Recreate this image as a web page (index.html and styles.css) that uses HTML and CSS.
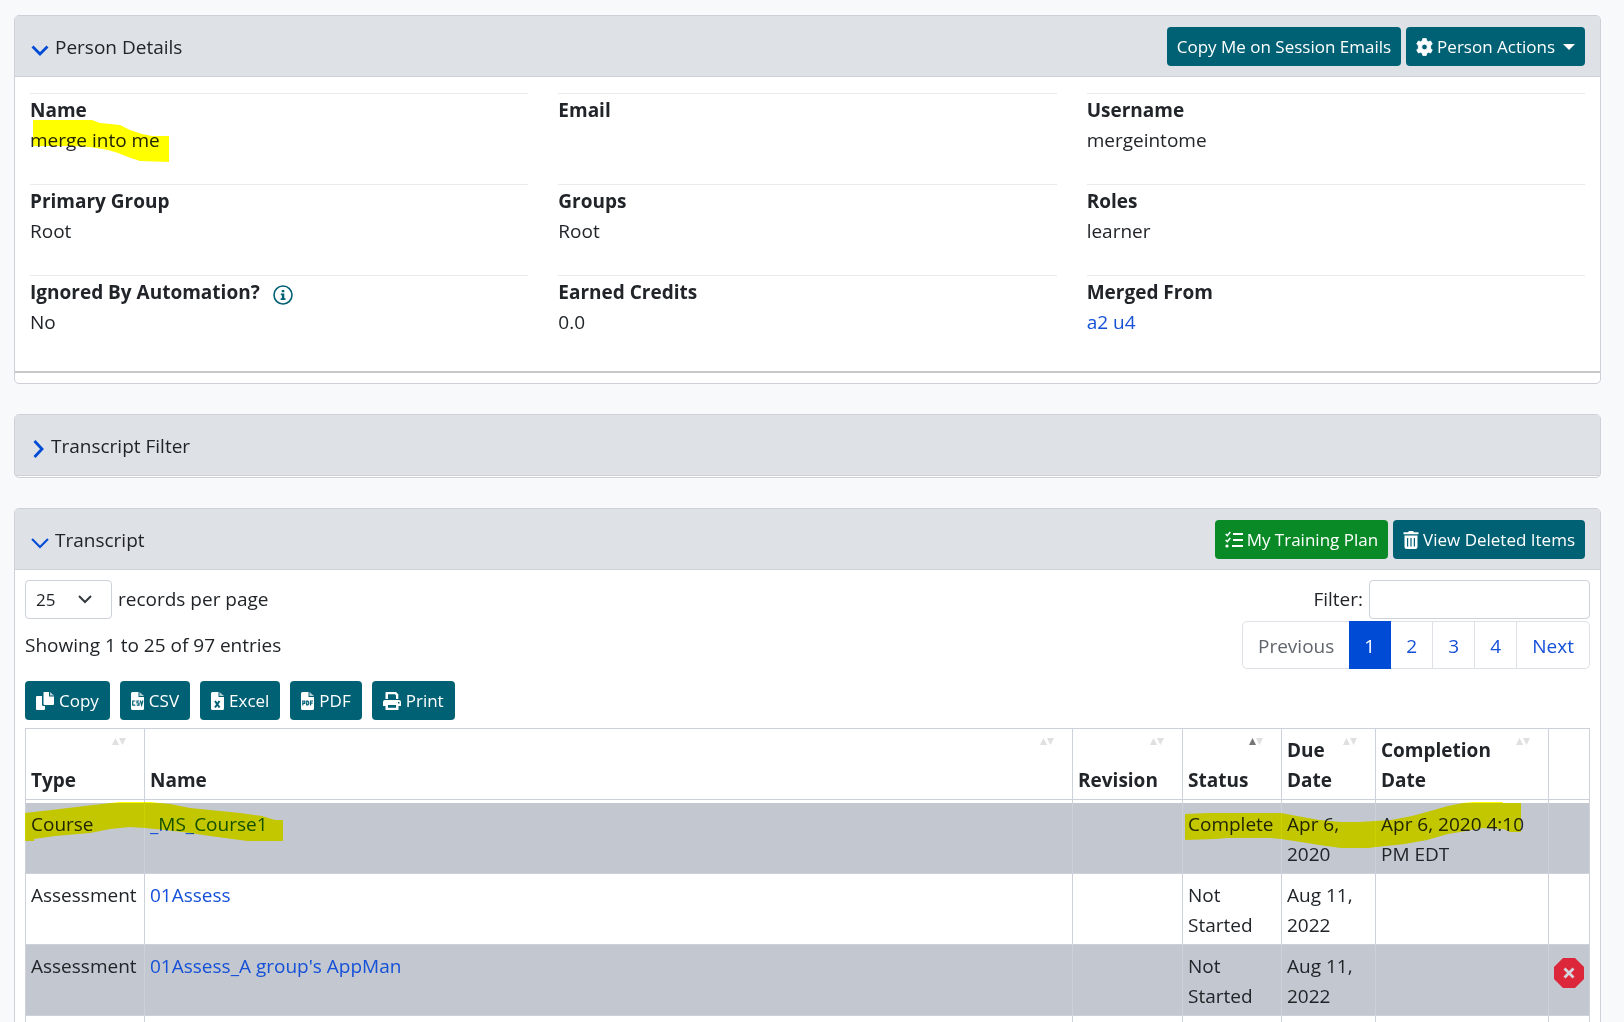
FILE: index.html
```html
<!DOCTYPE html>
<html lang="en">
<head>
<meta charset="utf-8">
<title>Person Details</title>
<link rel="stylesheet" href="styles.css">
</head>
<body>
<main class="page">
  <section class="card">
    <header class="card-header">
      <h2 class="card-title">
        <svg class="chevron" viewBox="0 0 18 18" aria-hidden="true"><path d="M1.500 5.500 9 13l7.500-7.500" fill="none" stroke="currentColor" stroke-width="2.800"/></svg>
        Person Details
      </h2>
      <div class="actions">
        <button type="button" class="btn">Copy Me on Session Emails</button>
        <button type="button" class="btn">
          <svg class="icon gear" viewBox="0 0 17 18" aria-hidden="true"><path fill="currentColor" fill-rule="evenodd" stroke="currentColor" stroke-linejoin="round" stroke-width=".8" d="M6.800.5h3.400l.6 2.300 1.500.9 2.300-.7 1.700 3-1.700 1.700v2.600l1.700 1.700-1.700 3-2.300-.7-1.500.9-.6 2.300H6.800l-.6-2.300-1.500-.9-2.300.7-1.700-3 1.700-1.700V7.700L.7 6l1.700-3 2.300.7 1.500-.9zM8.500 6.200a2.800 2.800 0 1 0 0 5.600 2.800 2.800 0 0 0 0-5.600z"/></svg>
          Person Actions
          <span class="caret"></span>
        </button>
      </div>
    </header>
    <div class="details">
      <dl class="detail-grid">
        <div class="detail">
          <dt>Name</dt>
          <dd>merge into me</dd>
          <svg class="marker marker-name" viewBox="0 0 136 42" aria-hidden="true"><path d="M0 0h59l8 3 20 2 10 5 12 4 10 2h17v26l-29-1-12-4-10-4-10-3-18-3-15-1H0z"/></svg>
        </div>
        <div class="detail"><dt>Email</dt><dd></dd></div>
        <div class="detail"><dt>Username</dt><dd>mergeintome</dd></div>
        <div class="detail"><dt>Primary Group</dt><dd>Root</dd></div>
        <div class="detail"><dt>Groups</dt><dd>Root</dd></div>
        <div class="detail"><dt>Roles</dt><dd>learner</dd></div>
        <div class="detail">
          <dt>Ignored By Automation?
            <svg class="info" viewBox="0 0 20 20" aria-hidden="true"><circle cx="10" cy="10" r="9" fill="none" stroke="currentColor" stroke-width="1.600"/><path fill="currentColor" d="M8.700 5h2.600v2.300H8.700zM7.800 8.500h3.500v4.700h1.200V15H7.600v-1.800h1.300v-2.900H7.800z"/></svg>
          </dt>
          <dd>No</dd>
        </div>
        <div class="detail"><dt>Earned Credits</dt><dd>0.0</dd></div>
        <div class="detail"><dt>Merged From</dt><dd><a href="#">a2 u4</a></dd></div>
      </dl>
      <hr class="divider">
    </div>
  </section>

  <section class="card card-collapsed">
    <header class="card-header">
      <h2 class="card-title">
        <svg class="chevron chevron-right" viewBox="0 0 14 18" aria-hidden="true"><path d="M3.500 1 11 9l-7.500 8" fill="none" stroke="currentColor" stroke-width="2.800"/></svg>
        Transcript Filter
      </h2>
    </header>
  </section>

  <section class="card">
    <header class="card-header">
      <h2 class="card-title">
        <svg class="chevron" viewBox="0 0 18 18" aria-hidden="true"><path d="M1 5 9 13l8-8" fill="none" stroke="currentColor" stroke-width="2"/></svg>
        Transcript
      </h2>
      <div class="actions">
        <button type="button" class="btn btn-green">
          <svg class="icon" viewBox="0 0 18 18" aria-hidden="true"><path d="M8 3h10M8 9h10M7 15h11" stroke="currentColor" stroke-width="2.200" fill="none"/><path d="m.7 3 1.600 1.700L5.300 1M.7 9l1.600 1.700L5.300 7" stroke="currentColor" stroke-width="1.500" fill="none"/><circle cx="2" cy="15" r="1.600" fill="currentColor"/></svg>
          My Training Plan
        </button>
        <button type="button" class="btn">
          <svg class="icon icon-trash" viewBox="0 0 16 18" aria-hidden="true"><path fill="currentColor" fill-rule="evenodd" d="M.5 1.200H5L6 0h4l1 1.200h4.500v2H.5zM1.500 4.500h13V16q0 2-2 2h-9q-2 0-2-2zM4 7v8.500h1.200V7zm3.400 0v8.500h1.200V7zm3.400 0v8.500H12V7z"/></svg>
          View Deleted Items
        </button>
      </div>
    </header>
    <div class="transcript">
      <div class="toolbar">
        <div class="toolbar-left">
          <div class="field">
            <select id="page-size" class="control select"><option>25</option><option>50</option><option>100</option></select>
            <label for="page-size">records per page</label>
          </div>
          <p class="summary">Showing 1 to 25 of 97 entries</p>
        </div>
        <div class="toolbar-right">
          <div class="field">
            <label for="filter">Filter:</label>
            <input id="filter" class="control search" type="search">
          </div>
          <nav class="pagination" aria-label="Transcript pages">
            <a class="disabled" href="#">Previous</a>
            <a class="current" href="#" aria-current="page">1</a>
            <a href="#">2</a>
            <a href="#">3</a>
            <a href="#">4</a>
            <a href="#">Next</a>
          </nav>
        </div>
      </div>
      <div class="exports">
        <button type="button" class="btn">
          <svg class="icon" viewBox="0 0 18 18" aria-hidden="true"><path fill="currentColor" d="M1 4h5v8.500q0 1.500 1.500 1.500H9v3q0 1-1 1H1q-1 0-1-1V5q0-1 1-1zM8 0h5v4.500h5V12q0 1-1 1H8.500q-1 0-1-1V1q0-1 .5-1z"/><path fill="currentColor" opacity=".7" d="M14 0v3.600h4z"/></svg>
          Copy
        </button>
        <button type="button" class="btn">
          <svg class="icon icon-file" viewBox="0 0 13 18" aria-hidden="true"><path fill="currentColor" d="M1.500 0H7.500v5H13v11.500q0 1.500-1.500 1.500h-10Q0 18 0 16.500v-15Q0 0 1.500 0z"/><path fill="currentColor" opacity=".7" d="M8.500 0v4H13z"/><path class="cut" d="M4.300 9H1.700v4.200h2.600M8.200 9H6v2h2v2.200H5.700M9.300 8.500l1.300 4.500 1.300-4.500"/></svg>
          CSV
        </button>
        <button type="button" class="btn">
          <svg class="icon icon-file" viewBox="0 0 13 18" aria-hidden="true"><path fill="currentColor" d="M1.500 0H7.500v5H13v11.500q0 1.500-1.500 1.500h-10Q0 18 0 16.500v-15Q0 0 1.500 0z"/><path fill="currentColor" opacity=".7" d="M8.500 0v4H13z"/><path class="cut cut-bold" d="m4 9 4.500 6.500M8.500 9 4 15.500"/></svg>
          Excel
        </button>
        <button type="button" class="btn">
          <svg class="icon icon-file" viewBox="0 0 13 18" aria-hidden="true"><path fill="currentColor" d="M1.500 0H7.500v5H13v11.500q0 1.500-1.500 1.500h-10Q0 18 0 16.500v-15Q0 0 1.500 0z"/><path fill="currentColor" opacity=".7" d="M8.500 0v4H13z"/><path class="cut" d="M1.800 13.500V9h2v2.300h-2M5.700 9h1l1 1v2l-1 1h-1zM9.600 13.500V9h2.400M9.600 11.200h2"/></svg>
          PDF
        </button>
        <button type="button" class="btn">
          <svg class="icon" viewBox="0 0 18 18" aria-hidden="true"><path fill="currentColor" fill-rule="evenodd" d="M3 0h10l2.300 2.300V7H13V3.500L12 2.300H5V7H2.500V.5zM2 8h14q2 0 2 2v4h-2.500v4h-13v-4H0v-4q0-2 2-2zm3 5v2.700h8V13zm10-3v1.500h1.500V10z"/></svg>
          Print
        </button>
      </div>
      <table class="records">
        <colgroup>
          <col class="col-type"><col><col class="col-revision"><col class="col-status"><col class="col-due"><col class="col-completion"><col class="col-action">
        </colgroup>
        <thead>
          <tr>
            <th scope="col">Type<svg class="sort" viewBox="0 0 14 7" aria-hidden="true"><path d="M0 7 3.500 0 7 7z"/><path d="M7 0h7l-3.500 7z"/></svg></th>
            <th scope="col">Name<svg class="sort" viewBox="0 0 14 7" aria-hidden="true"><path d="M0 7 3.500 0 7 7z"/><path d="M7 0h7l-3.500 7z"/></svg></th>
            <th scope="col">Revision<svg class="sort" viewBox="0 0 14 7" aria-hidden="true"><path d="M0 7 3.500 0 7 7z"/><path d="M7 0h7l-3.500 7z"/></svg></th>
            <th scope="col" aria-sort="ascending">Status<svg class="sort" viewBox="0 0 14 7" aria-hidden="true"><path class="sorted" d="M0 7 3.500 0 7 7z"/><path d="M7 0h7l-3.500 7z"/></svg></th>
            <th scope="col">Due Date<svg class="sort" viewBox="0 0 14 7" aria-hidden="true"><path d="M0 7 3.500 0 7 7z"/><path d="M7 0h7l-3.500 7z"/></svg></th>
            <th scope="col">Completion Date<svg class="sort" viewBox="0 0 14 7" aria-hidden="true"><path d="M0 7 3.500 0 7 7z"/><path d="M7 0h7l-3.500 7z"/></svg></th>
            <th scope="col"></th>
          </tr>
        </thead>
        <tbody>
          <tr>
            <td>Course<svg class="marker marker-course" viewBox="0 0 258 39" aria-hidden="true"><path d="m0 11 35-4 25-3L85 1l10-1h30l20 2 20 4 20 2 30 3 22 3 13 4h8v27l-10-1-11-3-22-3-30-4-20-3-25-3-20-2-15-1-20 2-20 4-35 3-21 3v2H0z"/></svg></td>
            <td><a href="#">_MS_Course1</a></td>
            <td></td>
            <td>Complete<svg class="marker marker-status" viewBox="0 0 336 46" aria-hidden="true"><path d="m0 12 24-1h72l16 3 22 4 22 2h18l32-2 21-4 22-6 14-4 15-3 11-1h29v1h18v29h-11l-6-3-21-1-17 3-18 3-21 6-22 4-29 3-7 1h-28l-22-3-18-3-20-3-11-1H42l-12 1-30 1z"/></svg></td>
            <td>Apr 6, 2020</td>
            <td>Apr 6, 2020 4:10 PM EDT</td>
            <td></td>
          </tr>
          <tr>
            <td>Assessment</td>
            <td><a href="#">01Assess</a></td>
            <td></td>
            <td>Not Started</td>
            <td>Aug 11, 2022</td>
            <td></td>
            <td></td>
          </tr>
          <tr>
            <td>Assessment</td>
            <td><a href="#">01Assess_A group's AppMan</a></td>
            <td></td>
            <td>Not Started</td>
            <td>Aug 11, 2022</td>
            <td></td>
            <td class="action"><button type="button" class="remove" aria-label="Remove"><svg viewBox="0 0 30 30" aria-hidden="true"><path fill="#dc2639" d="M9 0h12l9 9v12l-9 9H9l-9-9V9z"/><path d="m10.500 10.500 9 9m0-9-9 9" stroke="#d3d6dc" stroke-width="2.800"/></svg></button></td>
          </tr>
          <tr><td></td><td></td><td></td><td></td><td></td><td></td><td></td></tr>
        </tbody>
      </table>
    </div>
  </section>
</main>
</body>
</html>
```
FILE: styles.css
```css
* { box-sizing: border-box; }

html { overflow: hidden; height: 100%; }

body {
  margin: 0;
  height: 100%;
  overflow: hidden;
  background: #f8f9fb;
  color: #212529;
  font: 19px/30px "Open Sans", "Noto Sans", sans-serif;
}

a { color: #1450d8; text-decoration: none; }

.page {
  display: flex;
  flex-direction: column;
  gap: 30px;
  padding: 15px 23px 0 14px;
}

.card {
  border: 1px solid #cdd1d7;
  border-radius: 5px;
  background: #fff;
}

.card-header {
  display: flex;
  align-items: center;
  justify-content: space-between;
  min-height: 61px;
  padding: 0 15px;
  border-bottom: 1px solid #cdd1d7;
  border-radius: 4px 4px 0 0;
  background: #dee1e6;
}

.card-collapsed { padding-bottom: 1px; }

.card-title {
  display: flex;
  align-items: center;
  gap: 6px;
  margin: 0;
  padding-top: 2px;
  font-size: 19px;
  font-weight: 400;
}

.chevron { width: 19px; height: 18px; padding-left: 1px; margin-top: 6px; color: #004bd6; }
.chevron-right { width: 15px; }

.actions { display: flex; gap: 5px; }

.btn {
  display: inline-flex;
  align-items: center;
  gap: 5px;
  height: 39px;
  padding: 1px 11px 0;
  border: 0;
  border-radius: 4px;
  background: #006074;
  color: #fff;
  font: 17px/30px "Open Sans", "Noto Sans", sans-serif;
  white-space: nowrap;
}

.actions .btn { gap: 4px; padding: 1px 10px 0; }

.btn-green { background: #0a8a27; }

.icon { width: 18px; height: 18px; flex: none; }
.icon-file { width: 13px; }
.icon-trash { width: 16px; }
.gear { width: 17px; }
.cut { fill: none; stroke: #006074; stroke-width: 1.2; }
.cut-bold { stroke-width: 2; }

.caret {
  margin-left: 4px;
  border: 6px solid transparent;
  border-top-color: #fff;
  border-bottom: 0;
}

.details { padding-bottom: 10px; }

.detail-grid {
  display: grid;
  grid-template-columns: repeat(3, 1fr);
  column-gap: 30px;
  margin: 0;
  padding: 16px 15px 5px;
}

.detail {
  position: relative;
  min-height: 91px;
  padding-top: 1px;
  border-top: 1px solid #e9eaec;
}

.detail dt { display: flex; align-items: center; gap: 13px; font-weight: 700; }
.detail dd { margin: 0; }

.info { width: 20px; height: 20px; margin-top: 5px; color: #006074; }

.divider { height: 2px; margin: 0; border: 0; background: #c8c8c8; }

.marker {
  position: absolute;
  fill: #ff0;
  mix-blend-mode: multiply;
  pointer-events: none;
  z-index: 1;
}

.marker-name { left: 3px; top: 26px; width: 136px; height: 42px; }
.marker-course { left: -1px; top: 2px; width: 258px; height: 39px; }
.marker-status { left: 2px; top: 2px; width: 336px; height: 46px; }

.transcript { padding: 10px 10px 0; }

.toolbar { display: flex; justify-content: space-between; }

.toolbar-right { display: flex; flex-direction: column; align-items: flex-end; gap: 2px; }

.field { display: flex; align-items: center; gap: 6px; }
.field label { padding-bottom: 2px; }

.control {
  height: 39px;
  border: 1px solid #cdd1d9;
  border-radius: 4px;
  background-color: #fff;
  color: #212529;
  font: 17px/30px "Open Sans", "Noto Sans", sans-serif;
}

.select {
  width: 87px;
  padding: 0 10px;
  appearance: none;
  background-image: url("data:image/svg+xml,%3Csvg xmlns='http://www.w3.org/2000/svg' viewBox='0 0 14 9'%3E%3Cpath d='m1 1 6 6 6-6' fill='none' stroke='%23343a40' stroke-width='2'/%3E%3C/svg%3E");
  background-repeat: no-repeat;
  background-position: right 19px center;
  background-size: 14px 9px;
}

.search { width: 221px; padding: 0 10px; }

.summary { margin: 11px 0 0; }

.pagination {
  display: flex;
  height: 48px;
  border: 1px solid #dee1e6;
  border-radius: 5px;
}

.pagination a {
  display: flex;
  align-items: center;
  justify-content: center;
  min-width: 42px;
  padding: 1px 15px 0;
  border-right: 1px solid #dee1e6;
}

.pagination a:last-child { border-right: 0; }
.pagination .disabled { color: #5f656b; border-right: 0; }
.pagination .current { margin: -1px 0; background: #004bd6; color: #fff; border-color: #004bd6; }

.exports { display: flex; gap: 10px; margin: 12px 0 8px; }

.records {
  width: 100%;
  table-layout: fixed;
  border-collapse: separate;
  border-spacing: 0;
  border-top: 1px solid #cdd1d9;
  border-left: 1px solid #cdd1d9;
}

.col-type { width: 119px; }
.col-revision { width: 110px; }
.col-status { width: 99px; }
.col-due { width: 94px; }
.col-completion { width: 173px; }
.col-action { width: 41px; }

.records th,
.records td {
  position: relative;
  height: 71px;
  padding: 6px 5px 4px;
  border-right: 1px solid #cdd1d9;
  border-bottom: 1px solid #cdd1d9;
  text-align: left;
  vertical-align: top;
}

.records th { padding-right: 30px; vertical-align: bottom; }
.records th:last-child { padding-right: 5px; }

.records tbody tr:nth-child(odd) { background: #c3c7cf; }

.records tbody tr:first-child td { height: 74px; padding-top: 9px; box-shadow: inset 0 3px #fff; }

.sort { position: absolute; top: 9px; right: 18px; width: 14px; height: 7px; fill: #e0e0e0; }
.sorted { fill: #777; }

.records .action { padding-top: 13px; }

.remove { display: block; width: 30px; height: 30px; padding: 0; border: 0; background: none; }
.remove svg { display: block; width: 30px; height: 30px; }
```
